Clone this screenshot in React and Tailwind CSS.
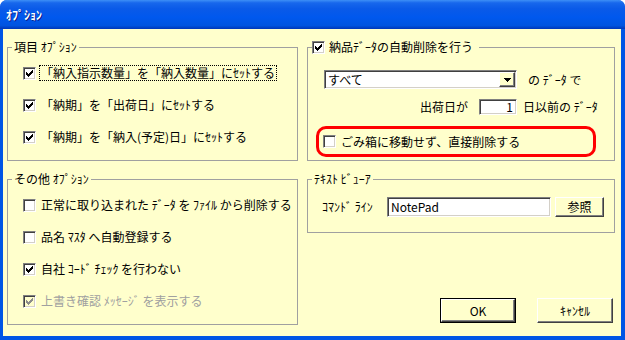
import React from "react";

const sunken =
  "border border-t-[#808080] border-l-[#808080] border-b-white border-r-white shadow-[inset_1px_1px_0_#404040,inset_-1px_-1px_0_#d4d0c8]";
const raised =
  "border border-t-white border-l-white border-b-[#404040] border-r-[#404040] shadow-[inset_-1px_-1px_0_#808080]";

function Check({ checked, disabled }) {
  return (
    <span
      className={`flex items-center justify-center w-[13px] h-[13px] shrink-0 ${sunken} ${
        disabled ? "bg-[#ffffcc]" : "bg-white"
      }`}
    >
      {checked && (
        <svg width="7" height="7" viewBox="0 0 7 7" shapeRendering="crispEdges">
          <path
            fill={disabled ? "#8c8c8c" : "#000"}
            d="M6 0h1v1h-1z M5 1h2v1h-2z M0 2h1v1h-1z M4 2h3v1h-3z M0 3h2v1h-2z M3 3h3v1h-3z M0 4h5v1h-5z M1 5h3v1h-3z M2 6h1v1h-1z"
          />
        </svg>
      )}
    </span>
  );
}

function Row({ checked, disabled, focused, children }) {
  return (
    <div className="flex items-center h-[16px] ml-[11px] gap-[3px]">
      <Check checked={checked} disabled={disabled} />
      <span
        className={`px-[1px] leading-[14px] whitespace-nowrap border ${
          focused ? "border-dotted border-black" : "border-transparent"
        } ${disabled ? "text-[#a0a0a0]" : ""}`}
      >
        {children}
      </span>
    </div>
  );
}

function Group({ legend, className = "", children }) {
  return (
    <fieldset className={`border border-[#a0a0a0] pl-[4px] min-w-0 ${className}`}>
      <legend className="px-[2px] leading-[16px] whitespace-nowrap">{legend}</legend>
      {children}
    </fieldset>
  );
}

function Button({ children, isDefault, className = "" }) {
  const face = (
    <div className={`flex-1 flex items-center justify-center bg-[#ffffcc] ${raised}`}>
      {children}
    </div>
  );
  return isDefault ? (
    <div className={`flex border border-black ${className}`}>{face}</div>
  ) : (
    <div className={`flex ${className}`}>{face}</div>
  );
}

export default function App() {
  return (
    <div
      className="w-[625px] h-[340px] flex flex-col bg-[#0055e5] rounded-t-[7px] overflow-hidden text-[12px] text-black"
      style={{ fontFamily: '"Noto Sans CJK JP", "Noto Sans", sans-serif' }}
    >
      {/* title bar */}
      <div className="h-[29px] shrink-0 flex items-center pl-[6px] bg-[linear-gradient(to_bottom,#3d8ff6_0%,#1767ec_10%,#0a5ae8_30%,#0058ee_60%,#0054e0_88%,#0036b8_100%)]">
        <span className="text-white font-bold text-[12px] leading-none [text-shadow:1px_1px_0_#0a1e8c]">
          ｵﾌﾟｼｮﾝ
        </span>
      </div>

      {/* client */}
      <div className="flex-1 flex ml-[3px] mr-[4px] mb-[4px] bg-[#ffffcc]">
        <div className="grid grid-cols-[291px_308px] gap-x-[9px] pl-[4px] pt-[10px] pb-[11px] w-full">
          {/* left column */}
          <div className="flex flex-col gap-[10px]">
            <Group legend="項目 ｵﾌﾟｼｮﾝ" className="h-[122px]">
              <div className="flex flex-col gap-[16px] mt-[10px]">
                <Row checked focused>
                  「納入指示数量」を「納入数量」にｾｯﾄする
                </Row>
                <Row checked>「納期」を「出荷日」にｾｯﾄする</Row>
                <Row checked>「納期」を「納入(予定)日」にｾｯﾄする</Row>
              </div>
            </Group>
            <Group legend="その他 ｵﾌﾟｼｮﾝ" className="h-[154px]">
              <div className="flex flex-col gap-[16px] mt-[10px]">
                <Row>正常に取り込まれた ﾃﾞｰﾀ を ﾌｧｲﾙ から削除する</Row>
                <Row>品名 ﾏｽﾀ へ自動登録する</Row>
                <Row checked>自社 ｺｰﾄﾞ ﾁｪｯｸ を行わない</Row>
                <Row checked disabled>
                  上書き確認 ﾒｯｾｰｼﾞ を表示する
                </Row>
              </div>
            </Group>
          </div>

          {/* right column */}
          <div className="flex flex-col">
            <fieldset className="border border-[#a0a0a0] pl-[4px] h-[122px] min-w-0">
              <legend className="flex items-center gap-[4px] pr-[6px] leading-[16px] whitespace-nowrap">
                <Check checked />
                <span>納品ﾃﾞｰﾀの自動削除を行う</span>
              </legend>
              <div className="flex items-center mt-[15px] ml-[12px] gap-[11px]">
                <div className={`flex w-[193px] h-[19px] p-[1px] bg-white ${sunken}`}>
                  <span className="flex-1 pl-[2px] leading-[15px]">すべて</span>
                  <div
                    className={`w-[16px] h-full flex items-center justify-center bg-[#ffffcc] ${raised}`}
                  >
                    <svg width="7" height="4" viewBox="0 0 7 4" shapeRendering="crispEdges">
                      <path d="M0 0h7v1h-7z M1 1h5v1h-5z M2 2h3v1h-3z M3 3h1v1h-1z" fill="#000" />
                    </svg>
                  </div>
                </div>
                <span className="whitespace-nowrap">の ﾃﾞｰﾀ で</span>
              </div>
              <div className="flex items-center mt-[9px] ml-[12px] gap-[6px]">
                <div className="w-[193px] flex items-center justify-end gap-[11px]">
                  <span className="whitespace-nowrap">出荷日が</span>
                  <div
                    className={`w-[38px] h-[16px] bg-white flex items-center justify-end pr-[3px] leading-none ${sunken}`}
                  >
                    1
                  </div>
                </div>
                <span className="whitespace-nowrap">日以前の ﾃﾞｰﾀ</span>
              </div>
              <div className="mt-[10px] ml-[4px] w-[280px] h-[31px] border-[3px] border-[#ff0000] rounded-[10px] flex items-center pl-[4px] gap-[5px]">
                <Check />
                <span className="whitespace-nowrap">ごみ箱に移動せず、直接削除する</span>
              </div>
            </fieldset>

            <Group legend="ﾃｷｽﾄ ﾋﾞｭｰｱ" className="h-[62px] mt-[10px]">
              <div className="flex items-center mt-[10px] ml-[10px]">
                <span className="w-[65px] whitespace-nowrap">ｺﾏﾝﾄﾞ ﾗｲﾝ</span>
                <div className={`w-[164px] h-[20px] bg-white pl-[3px] flex items-center ${sunken}`}>
                  NotePad
                </div>
                <Button className="w-[49px] h-[20px] ml-[4px]">参照</Button>
              </div>
            </Group>

            <div className="mt-auto flex justify-end gap-[21px] mr-[2px] mb-[2px]">
              <Button isDefault className="w-[76px] h-[25px]">
                OK
              </Button>
              <Button className="w-[76px] h-[25px]">ｷｬﾝｾﾙ</Button>
            </div>
          </div>
        </div>
      </div>
    </div>
  );
}
